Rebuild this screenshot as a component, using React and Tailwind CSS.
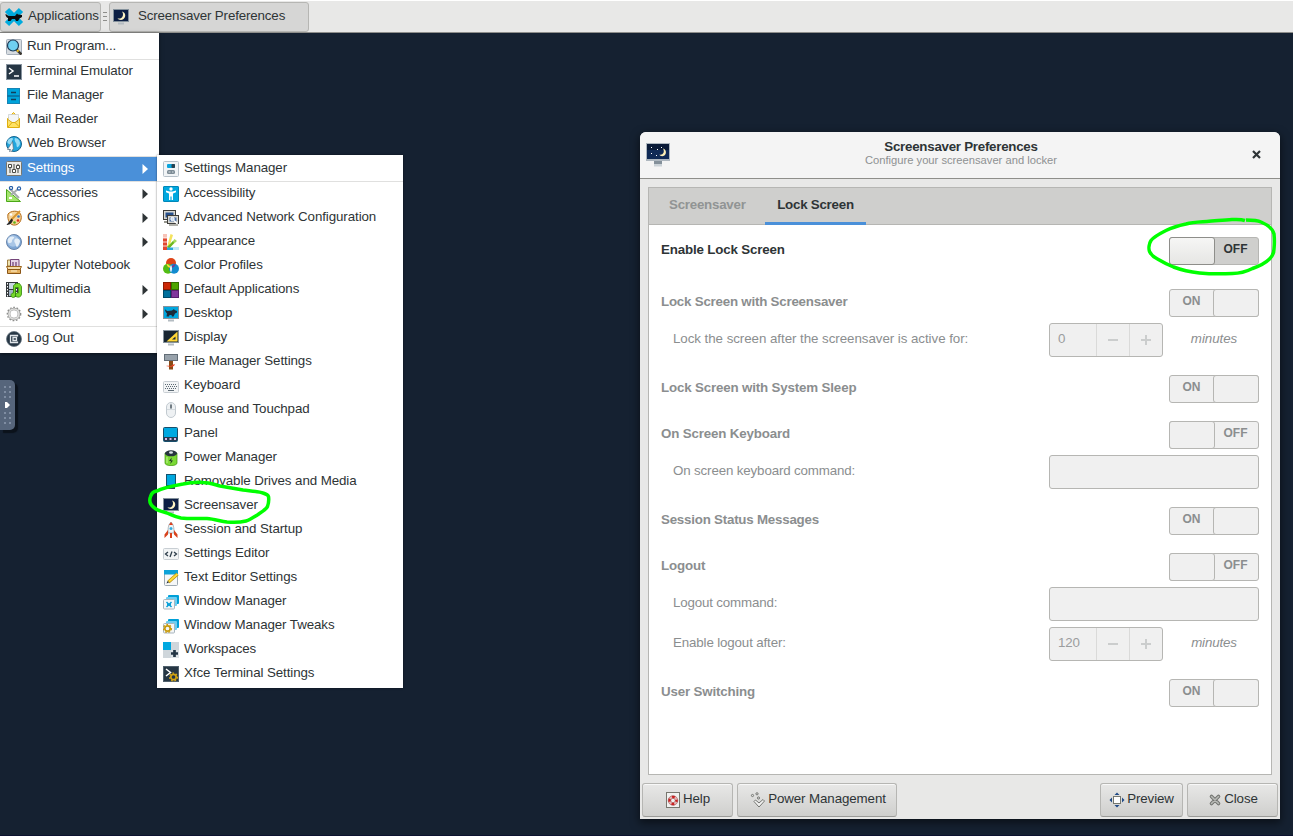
import React from "react";

const Monitor = ({ children, screen = "#15202f" }) => (
  <>
    <rect x="0" y="0" width="16" height="13" fill="#85929c" />
    <rect x="1" y="1" width="14" height="11" fill={screen} />
    <rect x="5" y="13.500" width="6" height="2" fill="#b4bcc2" />
    {children}
  </>
);

const moon = (
  <Monitor screen="#0d1f44">
    <path d="M9 2.500c3.500.8 4.500 5.200 1.500 7.500-2 1.500-5 1-6-.8 2 .8 4 .3 5-1.700.9-1.900.6-3.500-.5-5Z" fill="#fdf3c4" />
  </Monitor>
);

const rat = (
  <path
    d="M2 3.500c1 0 1.500 1.500 2.500 1.500L9 4.500 11 3l.5 1 2.500 1v1.500L12 7.500l-1.500 3H9L8.500 9h-2L6 10.500H3.500l.5-3C3 6.500 2 5 2 3.500Z"
    fill="#1c2b39"
  />
);

const windows = (
  <>
    <rect x="5" y="1" width="11" height="9" rx="1" fill="#00a0d8" />
    <rect x="3" y="3" width="11" height="9" rx="1" fill="#6dcdf0" />
    <rect x=".5" y="5.500" width="11" height="9.500" rx="1" fill="#f3f6f8" stroke="#a9b5be" />
  </>
);

const gear = (cx, cy, r, color, w) => (
  <>
    <circle cx={cx} cy={cy} r={r} fill="none" stroke={color} strokeWidth={w} />
    <circle cx={cx} cy={cy} r={r + w / 2 + 0.4} fill="none" stroke={color} strokeWidth="1.300" strokeDasharray="1.700 1.700" />
  </>
);

const ICONS = {
  run: (
    <>
      <rect x=".5" y=".5" width="15" height="15" rx="1" fill="#d6dbe0" stroke="#a3adb8" />
      <path d="M10.500 10.500 15.500 15.500" stroke="#3b3730" strokeWidth="2.500" />
      <path d="m11 11 1.500 1.500" stroke="#f2c21c" strokeWidth="2" />
      <circle cx="7" cy="6.500" r="5.500" fill="#6fd0f1" stroke="#1d3a56" strokeWidth="1.200" />
    </>
  ),
  terminal: (
    <>
      <rect x=".5" y=".5" width="15" height="15" fill="#263644" stroke="#87939e" />
      <path d="m3 4 4 3-4 3M8 12h5" fill="none" stroke="#fff" strokeWidth="1.500" />
    </>
  ),
  files: (
    <>
      <rect x="1.500" y=".5" width="12" height="15" fill="#00a3da" stroke="#1684b5" />
      <path d="M1.500 8h12" stroke="#0a4f76" />
      <path d="M5 4.500h5M5 11.500h5" stroke="#123e5a" strokeWidth="1.300" />
    </>
  ),
  mail: (
    <>
      <path d="M1.500 6.500 7.500.5l6 6v9h-12Z" fill="#ffe262" stroke="#dfae10" />
      <path d="M2.500 2.500h10v6L7.500 11l-5-2.500Z" fill="#f4f6f7" stroke="#c5cacd" strokeWidth=".7" />
      <path d="m2 15 4-4.500h3l4.500 4.500M2 7.500l4 3M13 7.500l-4 3" fill="none" stroke="#dfae10" />
    </>
  ),
  web: (
    <>
      <circle cx="8" cy="8" r="7.500" fill="#22a7de" stroke="#16648f" />
      <path d="M2 4c3-3 5-2 5-1S5 5 6 6s-1 3-3 2S1 6 2 4ZM9 2c3 0 5 3 5 5s-2 5-3 4 0-3-1-4-2-4-1-5Z" fill="#95dbf5" />
      <path d="m6.500 5.500-5 8h3L3.500 16h2l1-2.500h1Z" fill="#f5f6f7" stroke="#52616d" strokeWidth=".6" />
    </>
  ),
  settings: (
    <>
      <rect x=".5" y=".5" width="15" height="14" rx="1" fill="#e9e9e6" stroke="#78776f" />
      <path d="M4 3v9M8 3v9M12 3v9" stroke="#494a45" />
      <path d="M2.500 3.500h3v3h-3ZM6.500 8.500h3v3h-3ZM10.500 4.500h3v3h-3Z" fill="#fff" stroke="#494a45" />
    </>
  ),
  accessories: (
    <>
      <path d="M.5 3.500v12h14Z" fill="#a5e56f" stroke="#4aa817" />
      <path d="M4 3 13 12M12 3 5 9" stroke="#a6abad" strokeWidth="2" />
      <circle cx="5" cy="2" r="1.600" fill="none" stroke="#2860a8" strokeWidth="1.200" />
      <circle cx="13" cy="2.500" r="1.600" fill="none" stroke="#2860a8" strokeWidth="1.200" />
      <path d="M3 12h3" stroke="#fff" strokeWidth="2" />
    </>
  ),
  graphics: (
    <>
      <path d="M2 4C5 .5 12 0 14.500 4c2 4 0 10-5 11C4 16 1 10 2 4Z" fill="#f5d49a" stroke="#b46a15" />
      <circle cx="5" cy="4.500" r="1.200" fill="#fff" />
      <circle cx="12.500" cy="6.500" r="1.300" fill="#3a77c4" />
      <circle cx="12" cy="10.500" r="1.300" fill="#e02b1b" />
      <circle cx="8.500" cy="12.500" r="1.300" fill="#5fb417" />
      <path d="M14 1 5 10" stroke="#d9952c" strokeWidth="1.800" />
      <path d="m5.500 8.500-5 6.500c2 0 5-.5 6.500-5Z" fill="#242424" />
    </>
  ),
  internet: (
    <>
      <circle cx="8" cy="8" r="7.500" fill="#7ea6d4" stroke="#6a86ac" />
      <circle cx="7" cy="7" r="5.800" fill="#a9c6e6" />
      <path d="M2 5c2-3 5-3 6-2S6 5 6 7 4 9 3 9 1.500 7 2 5ZM9 5c2-1 5 0 5 2s-2 6-3 6-1-3-2-4-1-3 0-4Z" fill="#e4eef8" />
    </>
  ),
  jupyter: (
    <>
      <path d="M1.500 2h3v6h-3Z" fill="#f0e3b0" stroke="#8a6520" strokeWidth=".8" />
      <path d="M4.500 1.500h8.500V9H4.500Z" fill="#e6d3e8" stroke="#75457a" />
      <path d="M7 4v5M10 4v5" stroke="#75457a" strokeWidth="1.300" />
      <path d="M.5 8.500h15L14 11.500H2Z" fill="#f4dcaa" stroke="#9c651d" />
      <path d="M1.500 11.500h13v4h-13Z" fill="#e3b060" stroke="#8a5515" />
      <path d="M5 13h6" stroke="#fff2d0" />
    </>
  ),
  multimedia: (
    <>
      <rect x="0" y="0" width="12" height="15" fill="#33383c" />
      <rect x="3" y="1" width="6" height="6" fill="#c8d6e2" />
      <rect x="3" y="8" width="6" height="6" fill="#a2b4c4" />
      <path d="M1.500 1v14M10.500 1v14" stroke="#fff" strokeDasharray="1.500 1.500" />
      <path d="M10 1.500h3.500l2 3V12c0 4-6 4-6 1 0-2 1.500-2.500 3-2V5.500H9.500V13c0 3.500-4.500 3-4.500.5C5 11.500 6.500 11 7.500 11V3.500Z" fill="#76d82b" stroke="#318809" strokeWidth=".8" />
    </>
  ),
  system: (
    <>
      {gear(8, 8, 5, "#8c8d8b", 2.6)}
      <circle cx="8" cy="8" r="5" fill="none" stroke="#dededd" strokeWidth="1.700" />
    </>
  ),
  logout: (
    <>
      <circle cx="8" cy="8" r="7.500" fill="#263644" stroke="#66747f" strokeWidth=".8" />
      <path d="M11.500 5.500v-1h-7v7h7v-1M7 6.500h3.500v3H7Z" fill="none" stroke="#e1e6ea" strokeWidth="1.300" />
    </>
  ),
  manager: (
    <>
      <rect x=".5" y=".5" width="15" height="15" rx="1" fill="#f1f4f6" stroke="#b6c0c8" />
      <rect x="4" y="3" width="8" height="4" rx="1" fill="#0aa5dd" />
      <rect x="8.500" y="3" width="3.500" height="4" rx="1" fill="#27414f" />
      <rect x="4" y="9" width="8" height="4" rx="1.500" fill="#7c8b95" />
      <path d="M5.500 11h2M9 11h1.500" stroke="#d9e0e4" />
    </>
  ),
  accessibility: (
    <>
      <rect x=".5" y=".5" width="15" height="15" rx=".5" fill="#00a8df" stroke="#0087b8" />
      <circle cx="8" cy="3" r="1.700" fill="#fff" />
      <path d="M3 4.500 6.500 5.500h3L13 4.500v1.700L10 7.500V14H8.600v-3.500H7.400V14H6V7.500L3 6.200Z" fill="#fff" />
    </>
  ),
  network: (
    <>
      <rect x=".5" y=".5" width="12" height="9" fill="#d8d8d2" stroke="#3d3d3a" />
      <rect x="2.500" y="2.500" width="8" height="5" fill="#27508c" />
      <path d="M1 12h6" stroke="#98988f" strokeWidth="2" />
      <rect x="4.500" y="5.500" width="11" height="8" fill="#d8d8d2" stroke="#3d3d3a" />
      <rect x="6.500" y="7.500" width="7" height="4" fill="#4a6ea4" />
      <circle cx="9.500" cy="9" r="1.700" fill="#c8daf0" stroke="#fff" />
      <path d="m11 10.500 3.500 3.500" stroke="#fff" strokeWidth="1.500" />
      <path d="M6 15h9" stroke="#98988f" strokeWidth="1.500" />
    </>
  ),
  appearance: (
    <>
      <path d="M4 13 7.500 0 10 1 6 14Z" fill="#f4e25d" />
      <path d="m5 14 6.500-9L14 7l-8 7Z" fill="#a5db5f" />
      <path d="m4 13 6-6 1 2-5 6Z" fill="#6cb820" />
      <rect x="0" y="0" width="4" height="16" fill="#e2472f" />
      <rect x="0" y="0" width="4" height="4" fill="#f7c3b7" />
      <path d="M0 4h4M0 8h4M0 12h4" stroke="#fff" strokeWidth=".8" />
      <path d="M4 13.500h12V16H4Z" fill="#2ba7da" />
      <path d="M10 13h6v3h-6Z" fill="#bfe8f8" />
    </>
  ),
  color: (
    <>
      <circle cx="8" cy="5" r="5" fill="#df4418" />
      <circle cx="5" cy="10.700" r="5" fill="#53bd14" />
      <circle cx="11" cy="10.700" r="5" fill="#118bcf" />
      <path d="M3.500 6c2 .2 3.500 1.600 4.500 3.700C6 10.300 4 8.500 3.500 6Z" fill="#ffd83b" />
      <path d="M12.500 6C11 6 9 7.500 8 9.700c2 .500 4-1.500 4.500-3.700Z" fill="#7b3791" />
      <path d="M8 7c1.300 1.700 1.300 5 0 7.500-1.300-2-1.300-5.500 0-7.500Z" fill="#f6f8fa" />
    </>
  ),
  defaults: (
    <>
      <rect x=".5" y=".5" width="7" height="7" fill="#cb2807" stroke="#8e1b04" />
      <rect x="8.500" y=".5" width="7" height="7" fill="#4ea500" stroke="#347000" />
      <rect x=".5" y="8.500" width="7" height="7" fill="#00709c" stroke="#004a68" />
      <rect x="8.500" y="8.500" width="7" height="7" fill="#80379c" stroke="#57226c" />
    </>
  ),
  desktop: <Monitor screen="#00a7df">{rat}</Monitor>,
  display: (
    <Monitor screen="#182632">
      <path d="M14.500 1.500v10H3.500Z" fill="#ffd736" />
      <path d="M12.500 6.500v3H9Z" fill="#182632" />
    </Monitor>
  ),
  fmsettings: (
    <>
      <rect x="1.500" y=".5" width="13" height="6" fill="#98a2ab" stroke="#626d76" />
      <path d="M6 7h4v8.500H6Z" fill="#8a4a15" />
      <path d="M3 12c3-1 5 1 6-1l3-1-1 2-3 1" fill="#e64526" />
    </>
  ),
  keyboard: (
    <>
      <rect x=".5" y="3.500" width="15" height="11" rx="1" fill="#f2f4f5" stroke="#c8ced3" />
      <path d="M2 6.500h12M3 8.500h12M2 10.500h12" stroke="#5d6a74" strokeDasharray="1 1" />
      <path d="M5 12.500h6" stroke="#5d6a74" />
    </>
  ),
  mouse: (
    <>
      <rect x="3.500" y=".5" width="9" height="15" rx="4.500" fill="#eef1f3" stroke="#c2cad0" />
      <path d="M4 7.500h8M8 1v6" stroke="#d3d9dd" />
      <path d="M8 2.500v4" stroke="#4c5862" strokeWidth="1.500" />
    </>
  ),
  panel: (
    <>
      <rect x=".5" y="1.500" width="14" height="14" rx="1" fill="#00a8e0" stroke="#184e6b" />
      <path d="M1 11h13v4H1Z" fill="#263b50" />
      <path d="M2 12h2v2H2ZM6.500 12h2v2h-2ZM11 12h2v2h-2Z" fill="#ddb8e8" />
    </>
  ),
  power: (
    <>
      <path d="M2 3v10c0 3.500 12 3.500 12 0V3Z" fill="#7bd934" stroke="#3d920b" strokeWidth=".7" />
      <ellipse cx="8" cy="3.300" rx="6" ry="3" fill="#26343d" />
      <ellipse cx="8" cy="2.500" rx="2" ry="1.200" fill="#dce3e7" />
      <path d="M8.700 7.500 6 11h2l-.7 3L10 10.500H8.200Z" fill="#1f3329" />
      <path d="M4 7v6" stroke="#c2f392" />
    </>
  ),
  removable: (
    <>
      <rect x="3.500" y=".5" width="9" height="11" fill="#00a8df" stroke="#15516d" />
      <path d="M4 12h8v3H4Z" fill="#32495a" />
    </>
  ),
  moon,
  session: (
    <>
      <path d="M8 0C5.500 2.500 5 5 5 11h6c0-6-.5-8.500-3-11Z" fill="#f1f3f4" stroke="#9aa4ab" strokeWidth=".8" />
      <path d="M8 0 6 3h4Z" fill="#df3d1b" />
      <circle cx="8" cy="6.500" r="1.500" fill="#35ade0" />
      <path d="m5 8-3.500 4.500V16L5 12.500ZM11 8l3.500 4.500V16L11 12.500ZM7 11h2v5H7Z" fill="#d8431d" />
    </>
  ),
  editor: (
    <>
      <rect x=".5" y="2.500" width="15" height="11" rx="1" fill="#f2f4f5" stroke="#c8ced3" />
      <path d="M5 6 2.500 8 5 10M11 6l2.500 2-2.500 2M9 5.500l-2 5.500" fill="none" stroke="#2f3f4c" strokeWidth="1.300" />
    </>
  ),
  text: (
    <>
      <rect x="1.500" y=".5" width="13" height="15" rx="1" fill="#f5f7f8" stroke="#9da9b3" />
      <rect x="1" y="0" width="14" height="4.500" fill="#0ca2d8" />
      <path d="M14.500 4 5.500 12" stroke="#b98d0b" strokeWidth="3.200" />
      <path d="M14.500 4 6 11.500" stroke="#ffdc3a" strokeWidth="2" />
      <path d="m3.500 13.500 1-2.500 1.500 1.500Z" fill="#29353d" />
    </>
  ),
  wm: (
    <>
      {windows}
      <path d="m3.500 8 5 5M8.500 8l-5 5M4 10.500h4" stroke="#0ba1d9" strokeWidth="1.500" />
    </>
  ),
  wmtweaks: (
    <>
      {windows}
      {gear(4.5, 10.5, 2.7, "#c99b0d", 1.7)}
    </>
  ),
  workspaces: (
    <>
      <rect x="0" y="0" width="8" height="8" fill="#00a8e0" />
      <rect x="8" y="0" width="8" height="8" fill="#cfd6db" />
      <rect x="0" y="8" width="8" height="8" fill="#cfd6db" />
      <rect x="8" y="8" width="8" height="8" fill="#dde2e5" />
      <path d="M11.500 8v7M8 11.500h7" stroke="#243544" strokeWidth="2.700" />
    </>
  ),
  termsettings: (
    <>
      <rect x=".5" y=".5" width="15" height="15" fill="#263644" stroke="#51616d" />
      <path d="m3 3 4.500 3.500L3 10" fill="none" stroke="#fff" strokeWidth="1.500" />
      {gear(10.5, 11, 2.7, "#d3a412", 1.7)}
    </>
  ),
};

const Icon = ({ name, className = "" }) => (
  <svg viewBox="0 0 16 16" className={`block size-4 shrink-0 ${className}`}>
    {ICONS[name]}
  </svg>
);

const MAIN = [
  { t: "Run Program...", i: "run" },
  "-",
  { t: "Terminal Emulator", i: "terminal" },
  { t: "File Manager", i: "files" },
  { t: "Mail Reader", i: "mail" },
  { t: "Web Browser", i: "web" },
  "-",
  { t: "Settings", i: "settings", sub: true, active: true },
  "-",
  { t: "Accessories", i: "accessories", sub: true },
  { t: "Graphics", i: "graphics", sub: true },
  { t: "Internet", i: "internet", sub: true },
  { t: "Jupyter Notebook", i: "jupyter" },
  { t: "Multimedia", i: "multimedia", sub: true },
  { t: "System", i: "system", sub: true },
  "-",
  { t: "Log Out", i: "logout" },
];

const SUB = [
  { t: "Settings Manager", i: "manager" },
  "-",
  { t: "Accessibility", i: "accessibility" },
  { t: "Advanced Network Configuration", i: "network" },
  { t: "Appearance", i: "appearance" },
  { t: "Color Profiles", i: "color" },
  { t: "Default Applications", i: "defaults" },
  { t: "Desktop", i: "desktop" },
  { t: "Display", i: "display" },
  { t: "File Manager Settings", i: "fmsettings" },
  { t: "Keyboard", i: "keyboard" },
  { t: "Mouse and Touchpad", i: "mouse" },
  { t: "Panel", i: "panel" },
  { t: "Power Manager", i: "power" },
  { t: "Removable Drives and Media", i: "removable" },
  { t: "Screensaver", i: "moon" },
  { t: "Session and Startup", i: "session" },
  { t: "Settings Editor", i: "editor" },
  { t: "Text Editor Settings", i: "text" },
  { t: "Window Manager", i: "wm" },
  { t: "Window Manager Tweaks", i: "wmtweaks" },
  { t: "Workspaces", i: "workspaces" },
  { t: "Xfce Terminal Settings", i: "termsettings" },
];

const Menu = ({ items }) =>
  items.map((m, k) =>
    m === "-" ? (
      <div key={k} className="h-px bg-[#e0e0df]" />
    ) : (
      <div
        key={k}
        className={`flex h-6 items-start pl-1.5 pr-2 ${m.active ? "bg-[#4a90d9] text-white" : "text-[#2e3436]"}`}
      >
        <Icon name={m.i} className="mt-1" />
        <span className="ml-[5px] flex-1 leading-[21px] tracking-[-0.09px]">{m.t}</span>
        {m.sub && (
          <svg viewBox="0 0 6 10" className="mt-[7px] mr-[3px] h-2.5 w-1.5 fill-current">
            <path d="M.5 0 6 5 .5 10Z" />
          </svg>
        )}
      </div>
    )
  );

const Switch = ({ on, live }) => (
  <div
    className={`flex h-7 w-[90px] shrink-0 rounded-[3px] border text-[12px] font-bold tracking-normal ${
      live ? "border-[#b6b6b3] bg-[#cfcfcd] text-[#2e3436]" : "border-[#b6b6b3] bg-[#f0f0f0] text-[#8b8e8f]"
    } ${on ? "" : "flex-row-reverse"}`}
  >
    <span className="flex-1 pr-px text-center leading-[23px]">{on ? "ON" : "OFF"}</span>
    <span
      className={`-m-px w-[46px] rounded-[3px] border ${
        live ? "border-[#8e8e8a] bg-linear-to-b from-[#f6f6f5] to-[#e6e6e4]" : "border-[#b6b6b3] bg-[#f0f0f0]"
      }`}
    />
  </div>
);

const Row = ({ label, children, sub, className = "" }) => (
  <div
    className={`flex items-start justify-between pr-3 ${
      sub
        ? "h-[34px] pl-6 leading-[31px] tracking-[-0.05px] text-[#8b8e8f]"
        : "h-7 pl-3 leading-[25px] font-bold tracking-[-0.16px] text-[#8b8e8f]"
    } ${className}`}
  >
    <span>{label}</span>
    {children}
  </div>
);

const Spin = ({ value }) => (
  <div className="flex w-[210px] justify-between">
    <div className="flex h-[34px] w-[114px] rounded-[3px] border border-[#b6b6b3] bg-[#f0f0f0] text-[#9b9d9e]">
      <span className="w-[46px] pl-2 leading-[29px]">{value}</span>
      <span className="flex w-[33px] items-center justify-center border-l border-[#dadad9]">
        <svg viewBox="0 0 10 10" className="size-2.5"><path d="M0 5h10" stroke="#cbcdcd" strokeWidth="2" /></svg>
      </span>
      <span className="flex w-[33px] items-center justify-center border-l border-[#dadad9]">
        <svg viewBox="0 0 10 10" className="size-2.5"><path d="M0 5h10M5 0v10" stroke="#cbcdcd" strokeWidth="2" /></svg>
      </span>
    </div>
    <span className="w-[90px] text-center italic">minutes</span>
  </div>
);

const Entry = () => <div className="h-[34px] w-[210px] rounded-[3px] border border-[#b6b6b3] bg-[#f0f0f0]" />;

const Button = ({ children, className }) => (
  <div
    className={`flex h-[34px] items-start justify-center rounded-[3px] border border-[#b6b6b3] border-b-[#9b9b98] bg-linear-to-b from-[#e8e8e7] to-[#cfcfcd] leading-[30px] tracking-[-0.1px] shadow-[inset_0_1px_rgba(255,255,255,.7)] ${className}`}
  >
    {children}
  </div>
);

export default function App() {
  return (
    <div className="relative flex h-[836px] w-[1293px] flex-col overflow-hidden border-b border-[#0c1230] bg-[#152131] font-['Liberation_Sans',Arial,sans-serif] text-[13.333px] text-[#2e3436]">
      <header className="flex h-[33px] shrink-0 border-t border-b border-t-white border-b-[#8e8e8b] bg-[#e8e8e7] pt-px tracking-[-0.14px]">
        <div className="flex h-[30px] w-[101px] items-start rounded-[3px] border border-[#b6b6b3] bg-[#d6d6d5] pl-[3px] leading-[25px]">
          <svg viewBox="0 0 20 20" className="mt-1 size-5 shrink-0">
            <path d="M3 3l14 14M17 3 3 17" stroke="#00aadd" strokeWidth="6" />
            <path d="M1.500 7c1.500.5 2.500 2 4 2H11l2-2.500 1 1 4 .5v2l-2.500 1.500L14 14h-2l-1-2H8l-1.500 2H4v-3C2.500 10.500 1.500 9 1.500 7Z" fill="#0a0c0e" />
          </svg>
          <span className="ml-1 tracking-[-0.09px]">Applications</span>
        </div>
        <div className="flex w-2 flex-col items-center gap-[3px] pt-[10px]">
          <i className="h-px w-1 bg-[#8e8e8b]" />
          <i className="h-px w-1 bg-[#8e8e8b]" />
          <i className="h-px w-1 bg-[#8e8e8b]" />
        </div>
        <div className="flex h-[30px] w-[200px] items-start rounded-[3px] border border-[#b6b6b3] bg-[#d6d6d5] pl-[3px] leading-[25px]">
          <Icon name="moon" className="mt-[6px]" />
          <span className="ml-[9px]">Screensaver Preferences</span>
        </div>
      </header>

      <nav className="absolute top-[33px] left-0 h-[320px] w-[159px] bg-white py-0.5 shadow-[0_1px_4px_rgba(0,0,0,.5)]">
        <Menu items={MAIN} />
      </nav>
      <nav className="absolute top-[155px] left-[157px] h-[533px] w-[246px] bg-white py-0.5 shadow-[0_0_2px_rgba(0,0,0,.5)]">
        <Menu items={SUB} />
      </nav>

      <div className="absolute top-[380px] left-0 flex h-[50px] w-[15px] flex-col items-center justify-between rounded-r-[5px] bg-[#56657b] py-[6px] shadow-[3px_3px_1px_#0b121b]">
        <svg viewBox="0 0 7 12" className="h-3 w-[7px]"><path d="M0 0h2v2H0ZM5 0h2v2H5ZM0 5h2v2H0ZM5 5h2v2H5ZM0 10h2v2H0ZM5 10h2v2H5Z" fill="#7f8da2" /></svg>
        <svg viewBox="0 0 5 6" className="h-1.5 w-[5px]"><path d="M0 0h2l3 3-3 3H0Z" fill="#fff" /></svg>
        <svg viewBox="0 0 7 12" className="h-3 w-[7px]"><path d="M0 0h2v2H0ZM5 0h2v2H5ZM0 5h2v2H0ZM5 5h2v2H5ZM0 10h2v2H0ZM5 10h2v2H5Z" fill="#7f8da2" /></svg>
      </div>

      <section className="absolute top-[132px] left-[640px] flex h-[687px] w-[640px] flex-col rounded-t-[6px] bg-[#e8e8e7] shadow-[0_3px_9px_1px_rgba(0,0,0,.5)]">
        <div className="flex h-[47px] shrink-0 items-start justify-between rounded-t-[6px] border-b border-[#8e8e8a] bg-[#f4f4f4] pl-1.5">
          <svg viewBox="0 0 24 24" className="mt-[11px] size-6">
            <rect x="0" y="0" width="24" height="18" fill="#aeb7bf" />
            <rect x="1" y="1" width="22" height="15" fill="#102a56" />
            <rect x="1" y="1" width="22" height="6" fill="#0b1b38" />
            <path d="M17 5.500c3.500 1 4 5.500 1 7.300-2 1-4 .2-4.600-1.300 1.600.5 3.300 0 4.100-1.700.6-1.400.3-3-.5-4.300Z" fill="#fff0b5" />
            <path d="M5 4h1v1H5ZM11 6h1v1h-1ZM15 4h1v1h-1ZM5 10h1v1H5ZM10 12h1v1h-1Z" fill="#fff" />
            <rect x="8" y="18" width="8" height="3" fill="#84909a" />
            <rect x="8" y="21" width="8" height="2.500" fill="#cbd2d7" />
          </svg>
          <div className="w-60 pt-[7px] text-center">
            <div className="leading-[15px] font-bold tracking-[-0.26px]">Screensaver Preferences</div>
            <div className="text-[11.200px] leading-[13px] text-[#8e9192]">Configure your screensaver and locker</div>
          </div>
          <div className="flex w-7 justify-start pt-[18px]">
            <svg viewBox="0 0 9 9" className="size-[9px]"><path d="m1 1 7 7M8 1 1 8" stroke="#2e3436" strokeWidth="2.200" /></svg>
          </div>
        </div>

        <div className="mx-2 mt-2 flex h-[588px] flex-col border border-[#b6b6b3] bg-white">
          <div className="flex h-[37px] shrink-0 border-b border-[#b6b6b3] bg-[#cfcfcd] pl-2 leading-[33px] font-bold tracking-[-0.24px]">
            <div className="w-[108px] pl-3 text-[#919494]">Screensaver</div>
            <div className="h-[37px] w-[101px] border-b-[3px] border-[#4a90d9] text-center">Lock Screen</div>
          </div>
          <Row label="Enable Lock Screen" className="mt-3 !text-[#2e3436]"><Switch live /></Row>
          <Row label="Lock Screen with Screensaver" className="mt-6 !tracking-[-0.22px]"><Switch on /></Row>
          <Row sub label="Lock the screen after the screensaver is active for:" className="mt-1.5"><Spin value="0" /></Row>
          <Row label="Lock Screen with System Sleep" className="mt-[18px]"><Switch on /></Row>
          <Row label="On Screen Keyboard" className="mt-[18px]"><Switch /></Row>
          <Row sub label="On screen keyboard command:" className="mt-1.5 !tracking-[-0.14px]"><Entry /></Row>
          <Row label="Session Status Messages" className="mt-[18px] !tracking-[-0.22px]"><Switch on /></Row>
          <Row label="Logout" className="mt-[18px]"><Switch /></Row>
          <Row sub label="Logout command:" className="mt-1.5 !tracking-[-0.16px]"><Entry /></Row>
          <Row sub label="Enable logout after:" className="mt-1.5 !tracking-[-0.14px]"><Spin value="120" /></Row>
          <Row label="User Switching" className="mt-[18px]"><Switch on /></Row>
        </div>

        <div className="flex gap-1 px-0.5 pt-2">
          <Button className="w-[91px]">
            <svg viewBox="0 0 16 16" className="mt-2 mr-0.5 size-4">
              <rect x="1.500" y=".5" width="13" height="15" fill="#f1f1f0" stroke="#77776f" />
              <circle cx="8" cy="8.500" r="3.500" fill="none" stroke="#e6b4b4" strokeWidth="2.500" />
              <circle cx="8" cy="8.500" r="3.500" fill="none" stroke="#d01f1f" strokeWidth="2.500" strokeDasharray="2.750 2.750" strokeDashoffset="1.400" />
              <circle cx="8" cy="8.500" r="4.800" fill="none" stroke="#8b3a3a" strokeWidth=".5" />
              <circle cx="8" cy="8.500" r="2.200" fill="none" stroke="#8b3a3a" strokeWidth=".5" />
            </svg>
            <span>Help</span>
          </Button>
          <Button className="w-[160px]">
            <svg viewBox="0 0 16 16" className="mt-2 mr-0.5 ml-0.5 size-4" fill="none" stroke="#737571">
              <circle cx="2.500" cy="3.500" r="1.100" /><circle cx="7" cy="1.800" r="1.100" /><circle cx="8.500" cy="6" r="1.100" />
              <path d="m4 9.500 1.500-1.500 3.500 3 4-3.500 1.500 1.500L9 15Z" fill="#f2f2f1" />
            </svg>
            <span>Power Management</span>
          </Button>
          <Button className="ml-auto w-[83px]">
            <svg viewBox="0 0 16 16" className="mt-2 mr-0.5 size-4">
              <rect x="4.500" y="4.500" width="7" height="7" fill="#fff" stroke="#75776f" />
              <path d="M8 .5 10.500 3h-5ZM8 15.500 5.500 13h5ZM.5 8 3 5.500v5ZM15.500 8 13 10.500v-5Z" fill="#204a87" />
            </svg>
            <span>Preview</span>
          </Button>
          <Button className="w-[91px]">
            <svg viewBox="0 0 16 16" className="mt-2 mr-px size-4">
              <path d="m4.500 4.500 7 7M11.500 4.500l-7 7" stroke="#71736f" strokeWidth="3.600" strokeLinecap="round" />
              <path d="m4.500 4.500 7 7M11.500 4.500l-7 7" stroke="#b8bab6" strokeWidth="1.600" strokeLinecap="round" />
            </svg>
            <span>Close</span>
          </Button>
        </div>
      </section>

      <svg viewBox="0 0 1293 836" className="pointer-events-none absolute inset-0 h-[836px] w-[1293px]" fill="none" stroke="#00ff00" strokeWidth="3.500" strokeLinejoin="round">
        <path d="M157 491c5-3 15-5 26-7 7-1.500 14-2 20-1.500 6 0 11 2 17 3.500l23 4c8 1 16 1.500 20 3 3 1 5 2 5.500 3.500.5 3 0 7-1 10-1 2.500-5 5-9.500 8-4 2.500-8 5.500-12 6.500-6 1.500-13 1.500-19 1-7-1-13-3-20-3.500-9 0-18 .5-26-.5-6-1-9-3-14-5-6-1.500-10-2.500-13-5.500-4-3-5-7-3.500-11 1-3 3-5 6-5.500Z" />
        <path d="M1245 220.500c-4-1.500-9-1-13-1-9 .5-17 1.500-25 2-7 .5-14 .5-21 2.500-7 1.500-14 3.500-20 6.500-5 2.500-12 6-15 10-2 3-2.500 8-1.500 11 2 4 5 6 8 7.500 5 3 10 5.500 16 8 8 3 17 5 26 6 11 1 23 1 33 .5 8 0 14-2 20-5 7-2.500 13-5.500 17-9.500 3-3 4.500-6 4.500-10 .5-5 .5-10 0-15-1-4-6-9-13-12-4-2-10-2-15-2" />
      </svg>
    </div>
  );
}
